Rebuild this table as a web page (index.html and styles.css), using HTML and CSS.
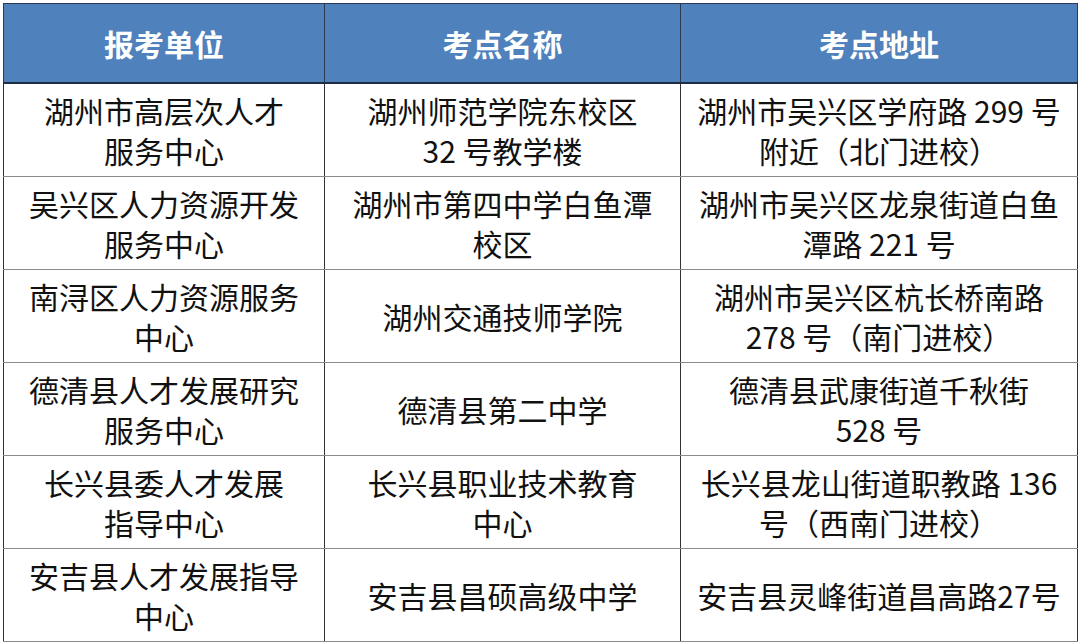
FILE: index.html
```html
<!DOCTYPE html>
<html lang="zh-CN">
<head>
<meta charset="utf-8">
<link rel="stylesheet" href="styles.css">
</head>
<body>
<table class="sites">
  <colgroup>
    <col class="c1"><col class="c2"><col class="c3">
  </colgroup>
  <thead>
    <tr><th>报考单位</th><th>考点名称</th><th>考点地址</th></tr>
  </thead>
  <tbody>
    <tr>
      <td>湖州市高层次人才<br>服务中心</td>
      <td>湖州师范学院东校区<br>32 号教学楼</td>
      <td>湖州市吴兴区学府路 299 号<br>附近（北门进校）</td>
    </tr>
    <tr>
      <td>吴兴区人力资源开发<br>服务中心</td>
      <td>湖州市第四中学白鱼潭<br>校区</td>
      <td>湖州市吴兴区龙泉街道白鱼<br>潭路 221 号</td>
    </tr>
    <tr>
      <td>南浔区人力资源服务<br>中心</td>
      <td>湖州交通技师学院</td>
      <td>湖州市吴兴区杭长桥南路<br>278 号（南门进校）</td>
    </tr>
    <tr>
      <td>德清县人才发展研究<br>服务中心</td>
      <td>德清县第二中学</td>
      <td>德清县武康街道千秋街<br>528 号</td>
    </tr>
    <tr>
      <td>长兴县委人才发展<br>指导中心</td>
      <td>长兴县职业技术教育<br>中心</td>
      <td>长兴县龙山街道职教路 136<br>号（西南门进校）</td>
    </tr>
    <tr>
      <td>安吉县人才发展指导<br>中心</td>
      <td>安吉县昌硕高级中学</td>
      <td>安吉县灵峰街道昌高路27号</td>
    </tr>
  </tbody>
</table>
</body>
</html>
```

FILE: styles.css
```css
html, body {
  margin: 0;
  padding: 0;
  background: #ffffff;
}
body {
  padding: 3px 0 0 3px;
  font-family: "Noto Sans CJK SC", "Noto Sans", sans-serif;
  color: #111111;
}
.sites {
  border-collapse: collapse;
  table-layout: fixed;
  width: 1074px;
}
.c1 { width: 321px; }
.c2 { width: 356px; }
.c3 { width: 397px; }
.sites th {
  height: 78px;
  padding: 0;
  background: #4f81bd;
  color: #ffffff;
  font-weight: bold;
  font-size: 30px;
  line-height: 40px;
  text-align: center;
  border: 1px solid #2b3a52;
  border-bottom: 2px solid #1e2c44;
}
.sites td {
  height: 92px;
  padding: 0;
  font-size: 30px;
  line-height: 40px;
  text-align: center;
  vertical-align: middle;
  white-space: nowrap;
  border-left: 1px solid #333333;
  border-right: 1px solid #333333;
  border-top: 1px solid #8c8c8c;
  border-bottom: 1px solid #8c8c8c;
}
```
